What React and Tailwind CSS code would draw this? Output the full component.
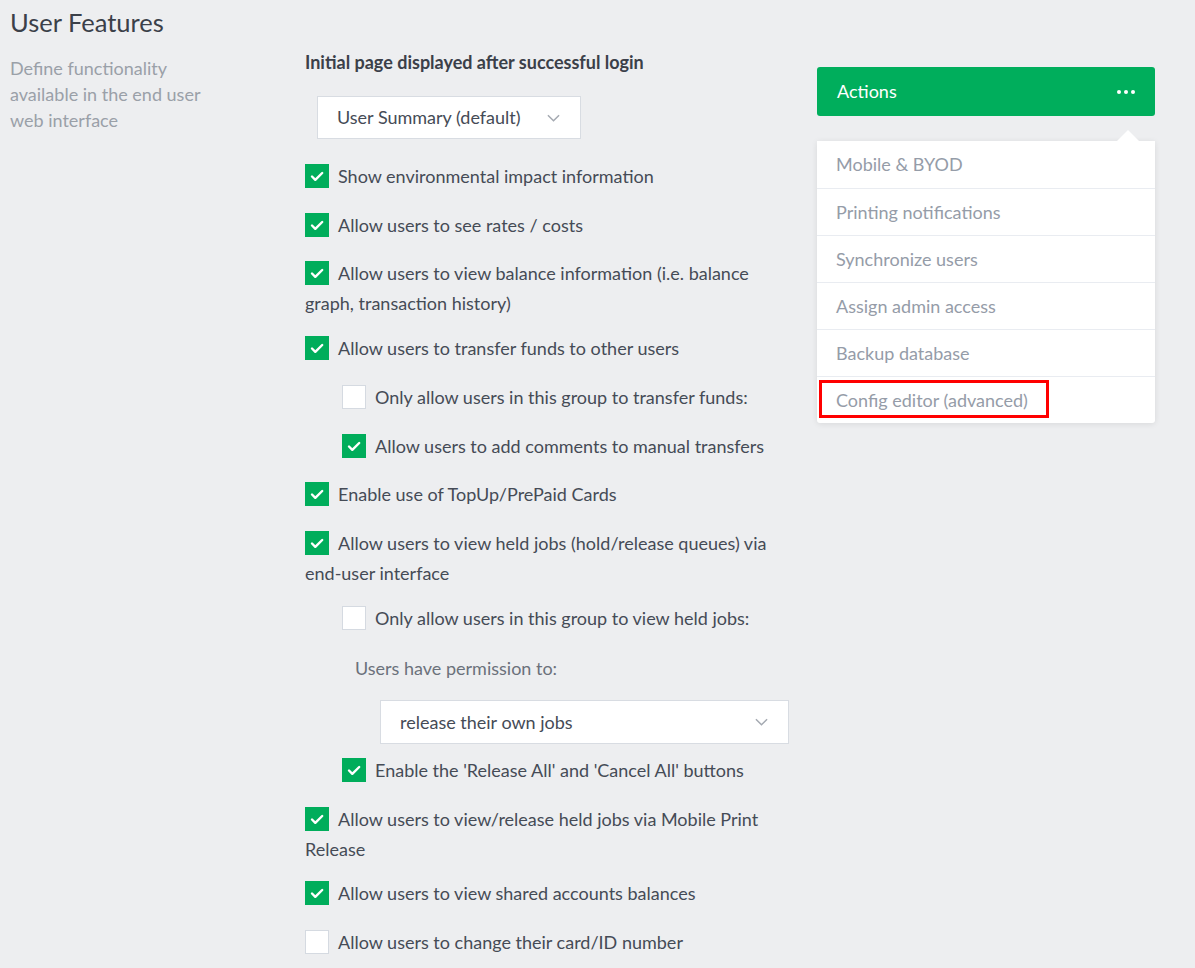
import React from 'react';

const FONT = { fontFamily: 'Lato, "Open Sans", sans-serif' };

const Check = ({ checked }) => (
  <span
    className={`inline-block align-top mt-[3px] mr-[9px] w-6 h-6 ${
      checked ? 'bg-[#00ad5b]' : 'bg-white border border-[#d5dae1]'
    }`}
  >
    {checked && (
      <svg viewBox="0 0 24 24" className="w-6 h-6">
        <path d="M7 12.5l3.3 3.3L17.2 9" fill="none" stroke="white" strokeWidth="2.4" strokeLinecap="round" strokeLinejoin="round" />
      </svg>
    )}
  </span>
);

const Chevron = () => (
  <svg viewBox="0 0 14 8" className="w-[13px] h-[8px]">
    <path d="M1 1l6 6 6-6" fill="none" stroke="#a4a9b1" strokeWidth="1.6" />
  </svg>
);

const Row = ({ checked, indent, mt, children }) => (
  <p className={`leading-[30px] text-[18px] text-[#454b56] ${indent ? 'pl-[37px]' : ''} ${mt}`}>
    <Check checked={checked} />
    {children}
  </p>
);

const menuItems = [
  'Mobile & BYOD',
  'Printing notifications',
  'Synchronize users',
  'Assign admin access',
  'Backup database',
  'Config editor (advanced)',
];

export default function App() {
  return (
    <div className="min-h-[968px] bg-[#edeef0] px-[10px]" style={FONT}>
      <div className="h-[44px] pt-[6px]">
        <h1 className="text-[25.5px] leading-[32px] text-[#3b4049]">User Features</h1>
      </div>

      <div className="flex">
        {/* Description */}
        <div className="w-[295px] pt-[11px]">
          <p className="w-[205px] text-[18px] leading-[26px] text-[#9aa0a8]">
            Define functionality available in the end user web interface
          </p>
        </div>

        {/* Settings */}
        <div className="w-[485px]">
          <p className="mt-[5px] text-[18px] leading-[26px] font-bold text-[#3b4049]">
            Initial page displayed after successful login
          </p>
          <div className="ml-[12px] mt-[21px] w-[264px] h-[43px] bg-white border border-[#d8dce2] flex items-center justify-between pl-[19px] pr-[20px] text-[18px] text-[#454b56]">
            <span>User Summary (default)</span>
            <Chevron />
          </div>

          <Row checked mt="mt-[22px]">Show environmental impact information</Row>
          <Row checked mt="mt-[19px]">Allow users to see rates / costs</Row>
          <Row checked mt="mt-[18px]">
            Allow users to view balance information (i.e. balance graph, transaction history)
          </Row>
          <Row checked mt="mt-[15px]">Allow users to transfer funds to other users</Row>
          <Row indent mt="mt-[19px]">Only allow users in this group to transfer funds:</Row>
          <Row checked indent mt="mt-[19px]">Allow users to add comments to manual transfers</Row>
          <Row checked mt="mt-[18px]">Enable use of TopUp/PrePaid Cards</Row>
          <Row checked mt="mt-[19px]">
            Allow users to view held jobs (hold/release queues) via{' '}
            <span className="whitespace-nowrap">end-user</span> interface
          </Row>
          <Row indent mt="mt-[15px]">Only allow users in this group to view held jobs:</Row>

          <p className="mt-[20px] pl-[50px] leading-[30px] text-[18px] text-[#6b717b]">Users have permission to:</p>
          <div className="ml-[75px] mt-[17px] w-[409px] h-[44px] bg-white border border-[#d8dce2] flex items-center justify-between pl-[19px] pr-[20px] text-[18px] text-[#454b56]">
            <span>release their own jobs</span>
            <Chevron />
          </div>

          <Row checked indent mt="mt-[11px]">Enable the 'Release All' and 'Cancel All' buttons</Row>
          <Row checked mt="mt-[19px]">Allow users to view/release held jobs via Mobile Print Release</Row>
          <Row checked mt="mt-[14px]">Allow users to view shared accounts balances</Row>
          <Row mt="mt-[19px]">Allow users to change their card/ID number</Row>
        </div>

        {/* Actions */}
        <div className="ml-[27px] mt-[23px] w-[338px]">
          <div className="h-[49px] rounded-[3px] bg-[#00ae5c] flex items-center justify-between pl-[20px] pr-[20px] text-[18px] text-white">
            <span>Actions</span>
            <span className="flex gap-[3px]">
              <span className="w-1 h-1 rounded-full bg-white" />
              <span className="w-1 h-1 rounded-full bg-white" />
              <span className="w-1 h-1 rounded-full bg-white" />
            </span>
          </div>

          <div className="relative mt-[25px] bg-white rounded-b-[3px] shadow-[0_1px_6px_rgba(0,0,0,0.09)]">
            <span className="absolute -top-[11px] right-[16px] w-0 h-0 border-l-[11px] border-r-[11px] border-b-[11px] border-l-transparent border-r-transparent border-b-white" />
            {menuItems.map((item, i) => (
              <div
                key={item}
                className={`relative h-[47px] flex items-center px-[19px] text-[18px] text-[#959ca8] ${
                  i > 0 ? 'border-t border-[#e9ecf1]' : ''
                }`}
              >
                {item}
                {i === menuItems.length - 1 && (
                  <span className="absolute left-[2px] top-[3px] w-[230px] h-[38px] border-[3px] border-[#ff0000]" />
                )}
              </div>
            ))}
          </div>
        </div>
      </div>
    </div>
  );
}
